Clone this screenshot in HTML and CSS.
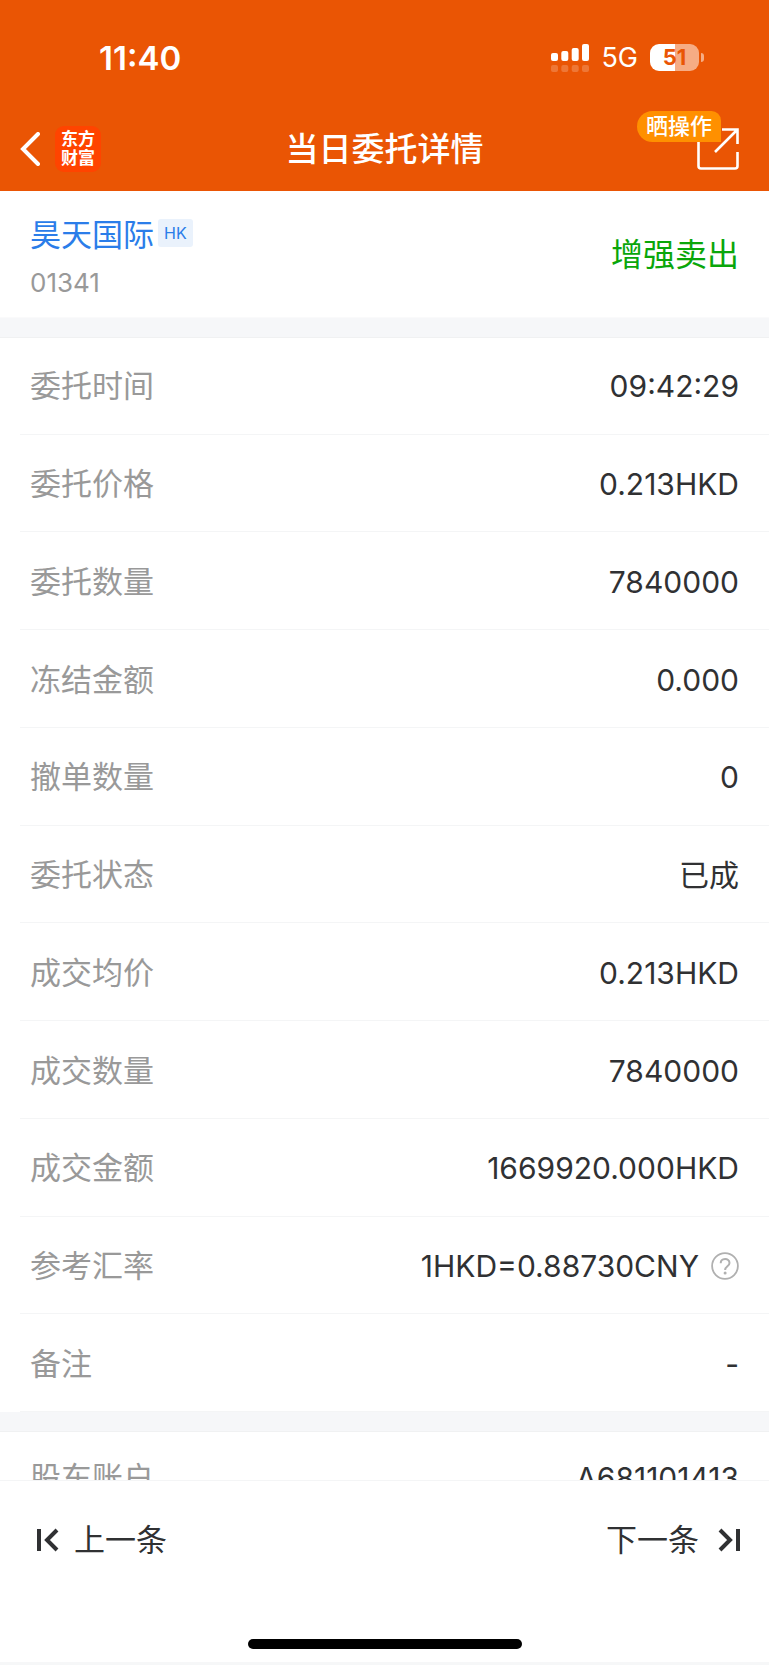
FILE: index.html
```html
<!DOCTYPE html>
<html lang="zh-CN">
<head>
<meta charset="utf-8">
<meta name="viewport" content="width=device-width, initial-scale=1">
<title>当日委托详情</title>
<link rel="stylesheet" href="styles.css">
</head>
<body>
<div class="app">
  <header class="header">
    <div class="status">
      <span class="status-time">11:40</span>
      <div class="status-icons">
        <svg class="signal" viewBox="0 0 38 28" aria-hidden="true">
          <g fill="#fff"><rect y="9" width="7" height="8" rx="2"/><rect x="10.300" y="7" width="7" height="10" rx="2"/><rect x="20.700" y="4" width="7" height="13" rx="2"/><rect x="31" width="7" height="17" rx="2"/></g>
          <g fill="#fff" opacity=".2"><rect y="21" width="7" height="7" rx="2"/><rect x="10.300" y="21" width="7" height="7" rx="2"/><rect x="20.700" y="21" width="7" height="7" rx="2"/><rect x="31" y="21" width="7" height="7" rx="2"/></g>
        </svg>
        <span class="network">5G</span>
        <div class="battery"><span class="battery-body">51</span><span class="battery-tip"></span></div>
      </div>
    </div>
    <nav class="nav">
      <div class="nav-left">
        <button class="icon-button" aria-label="返回">
          <svg class="back" viewBox="0 0 20 34"><path d="M18 2 3 17l15 15" fill="none" stroke="#fff" stroke-width="4" stroke-linecap="round" stroke-linejoin="miter"/></svg>
        </button>
        <div class="logo"><span>东方</span><span>财富</span></div>
      </div>
      <h1 class="title">当日委托详情</h1>
      <button class="icon-button share" aria-label="晒操作">
        <svg class="share-icon" viewBox="0 0 42 42"><path d="M1.500 10v28q0 2.500 2.500 2.500h34q2.500 0 2.500-2.500V24M25 1.500h15.500V16M40 2 18 24" fill="none" stroke="#fff" stroke-width="2.600"/></svg>
        <span class="badge">晒操作</span>
      </button>
    </nav>
  </header>
  <main class="content">
    <section class="summary">
      <div class="stock">
        <div class="stock-line"><a class="stock-name" href="#">昊天国际</a><span class="market">HK</span></div>
        <span class="code">01341</span>
      </div>
      <span class="side">增强卖出</span>
    </section>
    <dl class="list">
      <div class="row"><dt>委托时间</dt><dd>09:42:29</dd></div>
      <div class="row"><dt>委托价格</dt><dd>0.213HKD</dd></div>
      <div class="row"><dt>委托数量</dt><dd>7840000</dd></div>
      <div class="row"><dt>冻结金额</dt><dd>0.000</dd></div>
      <div class="row"><dt>撤单数量</dt><dd>0</dd></div>
      <div class="row"><dt>委托状态</dt><dd>已成</dd></div>
      <div class="row"><dt>成交均价</dt><dd>0.213HKD</dd></div>
      <div class="row"><dt>成交数量</dt><dd>7840000</dd></div>
      <div class="row"><dt>成交金额</dt><dd>1669920.000HKD</dd></div>
      <div class="row"><dt>参考汇率</dt><dd>1HKD=0.88730CNY
        <button class="icon-button" aria-label="汇率说明"><svg class="help" viewBox="0 0 28 28" fill="none" stroke="#b0b0b0" stroke-width="1.800"><circle cx="14" cy="14" r="12.900"/><path d="M9.700 11.300c0-5.600 8.800-5.600 8.800-.4 0 3.300-4.400 3.300-4.400 7" stroke-width="2"/><circle cx="14.100" cy="21" r="1.500" fill="#b0b0b0" stroke="none"/></svg></button></dd></div>
      <div class="row"><dt>备注</dt><dd>-</dd></div>
    </dl>
    <dl class="account">
      <div class="row"><dt>股东账户</dt><dd>A681101413</dd></div>
    </dl>
  </main>
  <footer class="footer">
    <div class="pager">
      <button class="page-button"><svg class="step" viewBox="0 0 22 24"><path d="M2 1v22M20 2 10 12l10 10" fill="none" stroke="#303133" stroke-width="4"/></svg>上一条</button>
      <button class="page-button next">下一条<svg class="step" viewBox="0 0 22 24"><path d="M20 1v22M2 2l10 10L2 22" fill="none" stroke="#303133" stroke-width="4"/></svg></button>
    </div>
    <div class="home-indicator"></div>
  </footer>
</div>
</body>
</html>
```
FILE: styles.css
```css
* {
  box-sizing: border-box;
}

body {
  margin: 0;
  background: #fff;
  color: #303133;
  font-family: Inter, "Noto Sans CJK SC", sans-serif;
  font-size: 31px;
  line-height: 40px;
}

button {
  padding: 0;
  border: 0;
  background: none;
  color: inherit;
  font: inherit;
  cursor: pointer;
}

svg {
  display: block;
}

.app {
  display: flex;
  flex-direction: column;
  height: 100vh;
}

.header {
  background: #ea5504;
  color: #fff;
}

.status {
  display: flex;
  align-items: center;
  justify-content: space-between;
  height: 106px;
  padding: 9px 65px 0 99px;
}

.status-time {
  font-size: 33px;
  font-weight: 600;
}

.status-icons {
  display: flex;
  align-items: center;
  gap: 12px;
}

.signal {
  width: 38px;
  height: 28px;
}

.network {
  font-size: 27px;
}

.battery {
  display: flex;
  align-items: center;
  gap: 2px;
}

.battery-body {
  width: 49px;
  height: 27px;
  border-radius: 9px;
  background: linear-gradient(to right, #fff 50%, #f6ac84 50%);
  color: #ea5504;
  font-size: 22px;
  font-weight: 700;
  line-height: 27px;
  text-align: center;
}

.battery-tip {
  width: 3px;
  height: 9px;
  border-radius: 0 4px 4px 0;
  background: #f6ac84;
}

.nav {
  display: grid;
  grid-template-columns: 1fr auto 1fr;
  align-items: center;
  height: 85px;
  padding: 0 20px;
}

.nav-left {
  display: flex;
  align-items: center;
  gap: 15px;
}

.back {
  width: 20px;
  height: 34px;
}

.logo {
  display: flex;
  flex-direction: column;
  align-items: center;
  justify-content: center;
  width: 46px;
  height: 46px;
  border-radius: 9px;
  background: #ff4400;
  font-size: 17px;
  font-weight: 700;
  line-height: 19px;
}

.title {
  margin: 0;
  font-size: 33px;
  font-weight: 500;
}

.share {
  position: relative;
  justify-self: end;
  margin-right: 10px;
}

.share-icon {
  width: 42px;
  height: 42px;
}

.badge {
  position: absolute;
  right: 18px;
  bottom: 28px;
  padding: 0 9px;
  border-radius: 16px 10px 0 16px;
  background: #ff9000;
  font-size: 22px;
  font-weight: 500;
  line-height: 31px;
  white-space: nowrap;
}

.content {
  display: flex;
  flex: 1;
  flex-direction: column;
  min-height: 0;
  overflow: hidden;
}

.summary {
  display: flex;
  align-items: center;
  justify-content: space-between;
  height: 127px;
  padding: 0 30px;
  box-shadow: inset 0 -1px #fafafb;
}

.stock {
  display: flex;
  flex-direction: column;
  gap: 13px;
  padding-top: 3px;
}

.stock-line {
  display: flex;
  align-items: flex-start;
  gap: 4px;
}

.stock-name {
  color: #2b7de9;
  text-decoration: none;
}

.market {
  margin-top: 4px;
  padding: 0 6px;
  border-radius: 3px;
  background: #eaf2fc;
  color: #2b7de9;
  font-size: 16px;
  line-height: 28px;
}

.code {
  color: #999;
  font-size: 26px;
  line-height: 30px;
}

.side {
  color: #0aa60a;
  font-size: 32px;
}

.list,
.account {
  display: flex;
  flex-direction: column;
  margin: 0;
  border-top: 19px solid #f6f7f9;
  box-shadow: inset 0 1px #f0f1f2;
}

.list {
  flex: 1;
}

.row {
  display: flex;
  flex: 1;
  align-items: center;
  justify-content: space-between;
  margin-left: 20px;
  padding: 2px 30px 0 10px;
  border-bottom: 1px solid #f4f5f6;
}

.row dt {
  color: #999;
}

.row dd {
  display: flex;
  align-items: center;
  gap: 12px;
  margin: 0;
  font-size: 30px;
}

.help {
  width: 28px;
  height: 28px;
}

.account {
  height: 68px;
  overflow: hidden;
}

.account .row {
  flex: 0 0 92px;
}

.footer {
  display: flex;
  flex-direction: column;
  align-items: center;
  justify-content: space-between;
  height: 185px;
  padding-bottom: 13px;
  border-top: 1px solid #f4f5f6;
  border-bottom: 3px solid #f6f7f8;
}

.pager {
  display: flex;
  align-items: center;
  justify-content: space-between;
  width: 100%;
  height: 118px;
  padding: 0 29px 0 37px;
}

.page-button {
  display: flex;
  align-items: center;
  gap: 15px;
}

.next {
  gap: 19px;
}

.step {
  width: 22px;
  height: 24px;
}

.home-indicator {
  width: 274px;
  height: 10px;
  border-radius: 5px;
  background: #000;
}
```
